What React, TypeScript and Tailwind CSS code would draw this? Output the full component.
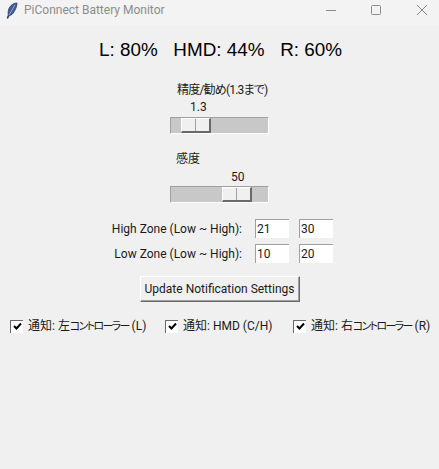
const font = "font-['Roboto','Noto_Sans_CJK_JP',sans-serif] [font-feature-settings:'palt']"

function Slider({ thumbClass }: { thumbClass: string }) {
  return (
    <div className="flex h-[17px] w-[99px] border-b border-r border-b-white border-r-white border-t border-l border-t-[#a0a0a0] border-l-[#a0a0a0] bg-[#c8c8c8]">
      <div className={`flex h-[15px] w-[30px] border-t border-l border-white bg-[#f0f0f0] border-r-2 border-b-2 border-r-[#696969] border-b-[#696969] ${thumbClass}`}>
        <div className="h-full w-[14px] border-r border-r-[#a0a0a0]" />
      </div>
    </div>
  )
}

function ZoneRow({ label, low, high }: { label: string; low: string; high: string }) {
  return (
    <div className="flex h-[19px] items-center justify-end">
      <span className="mr-[13px] whitespace-nowrap">{label}</span>
      <div className="mr-[10px] h-[19px] w-[34px] border-t border-l border-[#a0a0a0] bg-white pl-[1px] leading-[18px]">{low}</div>
      <div className="h-[19px] w-[34px] border-t border-l border-[#a0a0a0] bg-white pl-[1px] leading-[18px]">{high}</div>
    </div>
  )
}

function Notify({ children, className }: { children: React.ReactNode; className: string }) {
  return (
    <div className={`flex shrink-0 items-center ${className}`}>
      <div className="flex h-[13px] w-[13px] items-center justify-center border-t border-l border-t-[#696969] border-l-[#696969] bg-white">
        <svg width="9" height="9" viewBox="0 0 9 9">
          <path d="M1 4L3.500 6.500L8 1.500" fill="none" stroke="#000" strokeWidth="2" />
        </svg>
      </div>
      <span className="ml-[5px] whitespace-pre">{children}</span>
    </div>
  )
}

function Controller({ side, letter }: { side: string; letter: string }) {
  return (
    <>
      通知: {side}
      <span className="text-[11px] tracking-[-1.7px]">コントローラー</span> ({letter})
    </>
  )
}

export default function App() {
  return (
    <div className={`h-[469px] w-[439px] overflow-hidden bg-[#f0f0f0] text-[12px] leading-[16px] text-[#1a1a1a] ${font}`}>
      {/* title bar */}
      <div className="flex h-[25px] items-center bg-[#f3f3f3] pb-[5px]">
        <svg width="12" height="17" viewBox="0 0 12 17" className="ml-[6px]">
          <path d="M11 1C7 1 3.500 4 2.500 8C2 10.500 2 12 2.300 13L1 16L2 16.300L3.300 13.500C5 13.500 7 12 8.500 9C10 6.500 11 3.500 11 1Z" fill="#3f5f9a" stroke="#1c2c50" strokeWidth="0.7" />
          <path d="M9 3L3 13" stroke="#c8d4ea" strokeWidth="0.6" />
        </svg>
        <span className="ml-[6px] text-[#8c8c8c]">PiConnect Battery Monitor</span>
        <div className="ml-auto flex items-center">
          <svg width="10" height="10" viewBox="0 0 10 10" className="mr-[35px]">
            <path d="M0 5.500H10" stroke="#8a8a8a" />
          </svg>
          <svg width="10" height="10" viewBox="0 0 10 10" className="mr-[36px]">
            <rect x="0.500" y="0.500" width="9" height="9" rx="1" fill="none" stroke="#8a8a8a" />
          </svg>
          <svg width="10" height="10" viewBox="0 0 10 10" className="mr-[12px]">
            <path d="M0 0L10 10M10 0L0 10" stroke="#8a8a8a" />
          </svg>
        </div>
      </div>

      {/* battery levels */}
      <div className="mt-[13px] flex h-[24px] items-center justify-center whitespace-pre pl-[2px] font-['Liberation_Sans',sans-serif] text-[18.85px] text-black">
        L: 80%   HMD: 44%   R: 60%
      </div>

      {/* sliders */}
      <div className="mx-auto mt-[20px] w-[99px]">
        <div className="ml-[7px] h-[16px] whitespace-nowrap tracking-[-0.8px]">精度/勧め(1.3まで)</div>
        <div className="mt-[1px] ml-[20px] h-[16px]">1.3</div>
        <div className="mt-[2px]"><Slider thumbClass="ml-[10px]" /></div>
        <div className="mt-[17px] ml-[6px] h-[16px]">感度</div>
        <div className="mt-[2px] ml-[61px] h-[16px]">50</div>
        <div className="mt-[1px]"><Slider thumbClass="ml-[51px]" /></div>
      </div>

      {/* zones */}
      <div className="mt-[16px] flex w-[333px] flex-col gap-[6px]">
        <ZoneRow label="High Zone (Low ~ High):" low="21" high="30" />
        <ZoneRow label="Low Zone (Low ~ High):" low="10" high="20" />
      </div>

      <div className="mt-[13px] flex justify-center">
        <button className="h-[26px] w-[160px] whitespace-nowrap border border-t-white border-l-white border-r-[#696969] border-b-[#696969] bg-[#f0f0f0] text-[#1a1a1a] shadow-[inset_-1px_-1px_0_#a0a0a0]">
          Update Notification Settings
        </button>
      </div>

      {/* notification checkboxes */}
      <div className="mt-[16px] flex h-[16px] items-center">
        <Notify className="ml-[10px] w-[155px]"><Controller side="左" letter="L" /></Notify>
        <Notify className="w-[128px]">通知: HMD (C/H)</Notify>
        <Notify className=""><Controller side="右" letter="R" /></Notify>
      </div>
    </div>
  )
}
